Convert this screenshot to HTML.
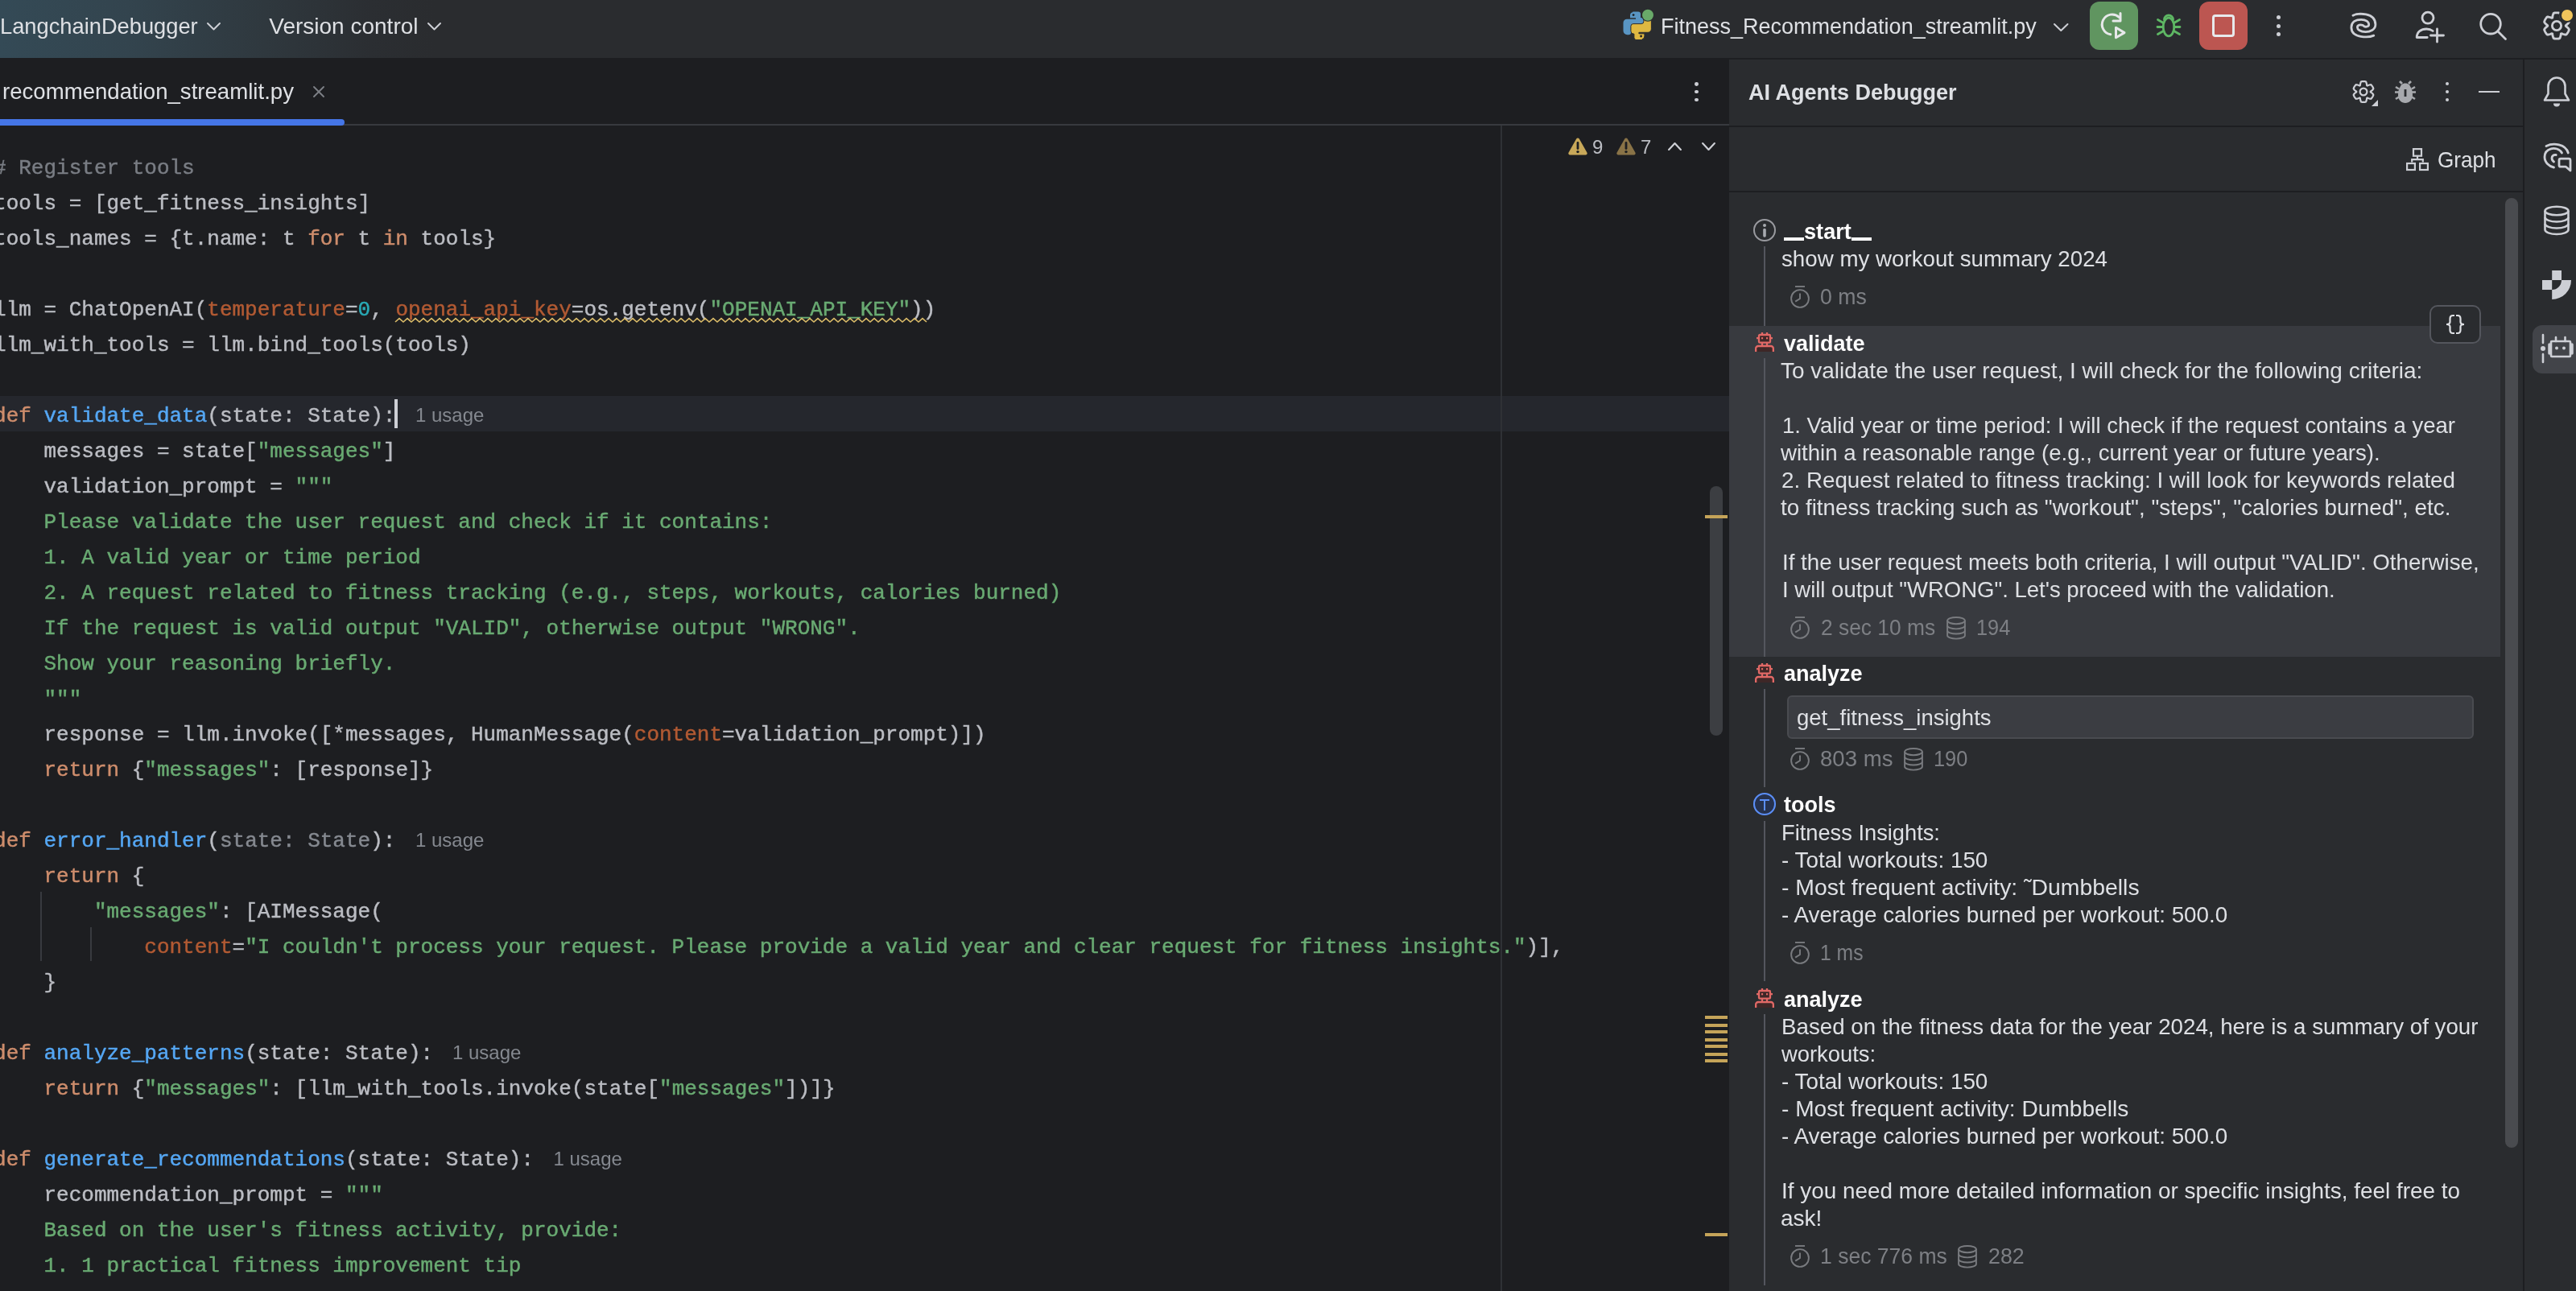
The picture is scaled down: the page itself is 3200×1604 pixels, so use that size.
<!DOCTYPE html><html><head><meta charset="utf-8"><style>
*{box-sizing:border-box;margin:0;padding:0}
html,body{width:3200px;height:1604px;overflow:hidden;background:#1e1f22}
body{position:relative;font-family:"Liberation Sans",sans-serif;color:#dfe1e5;-webkit-font-smoothing:antialiased}
#root{position:absolute;left:0;top:0;width:3200px;height:1604px;will-change:transform;opacity:0.999}
.a{position:absolute}
svg{position:absolute;overflow:visible}
#title{left:0;top:0;width:3200px;height:72px;background:#2b2d30}
#grad{left:0;top:0;width:620px;height:72px;background:linear-gradient(90deg,#354b57 0px,#34454f 160px,#30393f 330px,#2c2f33 460px,#2b2d30 540px)}
.tt{position:absolute;font-size:28px;color:#dfe1e5;white-space:pre;line-height:34px}
#editor{left:0;top:72px;width:2148px;height:1532px;background:#1e1f22;overflow:hidden}
#code{position:absolute;left:-7.94px;top:115px;-webkit-text-stroke-width:0.45px;font-family:"Liberation Mono",monospace;font-size:26px;line-height:44px;color:#bcbec4;white-space:pre}
.ln{height:44px}
.k{color:#cf8e6d}.f{color:#56a8f5}.s{color:#6aab73}.n{color:#2aacb8}.c{color:#7a7e85}.p{color:#b35b34}.u{color:#868a91}
.pw{color:#b35b34}.sw{color:#6aab73}
.hint{position:absolute;font-size:24px;color:#868a91;white-space:pre;line-height:34px}
#panel{left:2148px;top:74px;width:986px;height:1530px;background:#2b2d30}
#strip{left:3136px;top:74px;width:64px;height:1530px;background:#2b2d30}
.pt{position:absolute;font-size:28px;color:#dfe1e5;white-space:pre;line-height:34px}
.pb{position:absolute;font-size:27px;font-weight:bold;color:#ffffff;white-space:pre;line-height:34px}
.meta{position:absolute;font-size:28px;color:#7e8085;white-space:pre;line-height:34px}
</style></head><body><div id="root"><div id="title" class="a"></div><div id="grad" class="a"></div>
<div class="tt" style="left:0.0px;top:15.9px;transform:scaleX(0.9742);transform-origin:0 0;">LangchainDebugger</div>
<svg style="left:257px;top:28px" width="17" height="9.5" viewBox="0 0 17 9.5"><path d="M1.0 1.0L8.5 8.5L16.0 1.0" fill="none" stroke="#ced0d6" stroke-width="2.0" stroke-linecap="round" stroke-linejoin="round"/></svg>
<div class="tt" style="left:334.3px;top:15.9px;transform:scaleX(1.0000);transform-origin:0 0;">Version control</div>
<svg style="left:531px;top:28px" width="17" height="9.5" viewBox="0 0 17 9.5"><path d="M1.0 1.0L8.5 8.5L16.0 1.0" fill="none" stroke="#ced0d6" stroke-width="2.0" stroke-linecap="round" stroke-linejoin="round"/></svg>
<svg style="left:2016px;top:14px" width="36" height="36" viewBox="0 0 36 36">
<path fill="#5a96c4" d="M12.5 0.5h6.5a3 3 0 0 1 3 3v4.5h0.5a3.5 3.5 0 0 1 3.5 3.5v6a3 3 0 0 1-3 3h-10a3 3 0 0 0-3 3v2.8a3 3 0 0 1-3 3h-1.5a5 5 0 0 1-5-5v-10a4.5 4.5 0 0 1 4.5-4.5h11v-1.5h-7v-3a4 4 0 0 1 3-4z"/>
<path fill="#e0b942" stroke="#2b2d30" stroke-width="1" d="M23.4 35.6h-6.5a3 3 0 0 1-3-3v-4.5h-0.5a3.5 3.5 0 0 1-3.5-3.5v-6a3 3 0 0 1 3-3h10a3 3 0 0 0 3-3v-2.8a3 3 0 0 1 3-3h1.5a5 5 0 0 1 5 5v10a4.5 4.5 0 0 1-4.5 4.5h-11v1.5h7v3a4 4 0 0 1-3 4z"/>
<circle cx="13.1" cy="4.6" r="1.4" fill="#1e1f22"/><circle cx="22.6" cy="31" r="1.4" fill="#1e1f22"/>
<circle cx="31" cy="4.8" r="8" fill="#2b2d30"/><circle cx="31" cy="4.8" r="7" fill="#6aab6a"/></svg>
<div class="tt" style="left:2063px;top:16.2px;font-size:27px;">Fitness_Recommendation_streamlit.py</div>
<svg style="left:2551px;top:29px" width="18.5" height="10" viewBox="0 0 18.5 10"><path d="M1.0 1.0L9.25 9.0L17.5 1.0" fill="none" stroke="#ced0d6" stroke-width="2.0" stroke-linecap="round" stroke-linejoin="round"/></svg>
<div class="a" style="left:2596px;top:2px;width:60px;height:60px;border-radius:12px;background:#619661"></div>
<svg style="left:2596px;top:2px" width="60" height="60" viewBox="0 0 60 60" fill="none" stroke="#e8e9eb" stroke-width="3" stroke-linecap="round" stroke-linejoin="round">
<path d="M36.5 19.5A12.5 12.5 0 1 0 25.8 40.8"/><path d="M38 14.5v9.5h-9"/><path d="M32.5 32.3v12.5l10.5-6.2z"/></svg>
<svg style="left:2678px;top:16px" width="32" height="32" viewBox="0 0 32 32" fill="none" stroke="#5fb865" stroke-width="2.8" stroke-linecap="round">
<ellipse cx="16" cy="17.5" rx="6.8" ry="11.3"/><path d="M10.5 8.5a5.5 5.5 0 0 1 11 0"/><path d="M2 17.5h7M23 17.5h7M2.5 8.5l7 4M29.5 8.5l-7 4M2.5 26.5l7-4M29.5 26.5l-7-4"/></svg>
<div class="a" style="left:2732px;top:2px;width:60px;height:60px;border-radius:12px;background:#bd5752"></div>
<div class="a" style="left:2748px;top:18px;width:28px;height:28px;border:3px solid #e8eaed;border-radius:4px"></div>
<div class="a" style="left:2827.5px;top:18.7px;width:5px;height:5px;border-radius:50%;background:#ced0d6"></div>
<div class="a" style="left:2827.5px;top:29.6px;width:5px;height:5px;border-radius:50%;background:#ced0d6"></div>
<div class="a" style="left:2827.5px;top:40.4px;width:5px;height:5px;border-radius:50%;background:#ced0d6"></div>
<svg style="left:2912px;top:10px" width="48" height="44" viewBox="0 0 48 44" fill="none" stroke="#ced0d6" stroke-width="2.8" stroke-linecap="round">
<path d="M10.9 9.2C17 6 38.9 5 38.9 20.5C38.9 27 32 29.7 26.6 29.7C20 29.7 16.4 26.5 16.4 23.9C16.4 21 20 20 23.5 21.5"/>
<path d="M36.8 34.1C31 36.7 8.9 38 8.9 23.9C8.9 17 15 14.3 21.1 14.3C27 14.3 30.7 17 30.7 20.5C30.7 23 27 24 24.5 22.5"/></svg>
<svg style="left:3000px;top:13px" width="38" height="40" viewBox="0 0 38 40" fill="none" stroke="#ced0d6" stroke-width="2.8" stroke-linecap="round">
<circle cx="16" cy="9.2" r="7"/><path d="M2.2 33.5c0-7 5.5-10.5 12-10.5c4 0 6 1 8 2.5M2.2 33.5h13"/><path d="M27.5 23v16M19.5 31h16"/></svg>
<svg style="left:3078px;top:14px" width="38" height="38" viewBox="0 0 38 38" fill="none" stroke="#ced0d6" stroke-width="2.8" stroke-linecap="round">
<circle cx="16" cy="15.7" r="12.3"/><path d="M25 25l9.5 9.5"/></svg>
<svg style="left:3155px;top:11px" width="42" height="42" viewBox="-21 -21 42 42" fill="none" stroke="#ced0d6" stroke-width="2.8">
<path d="M0.0 -16.2L0.6 -16.2L1.1 -16.2L1.7 -16.1L2.3 -16.0L2.8 -16.0L3.4 -15.8L3.9 -15.5L4.2 -14.7L4.5 -13.9L4.8 -13.1L5.0 -12.3L5.1 -11.5L5.2 -10.7L5.3 -9.9L5.6 -9.7L6.0 -9.6L6.7 -9.9L7.4 -10.2L8.2 -10.5L9.0 -10.7L9.8 -10.8L10.6 -11.0L11.5 -11.1L12.0 -10.8L12.4 -10.4L12.8 -10.0L13.1 -9.5L13.4 -9.1L13.7 -8.6L14.0 -8.1L14.3 -7.6L14.6 -7.1L14.8 -6.6L15.0 -6.1L15.2 -5.5L15.4 -5.0L15.3 -4.4L14.8 -3.7L14.3 -3.0L13.7 -2.4L13.1 -1.8L12.5 -1.3L11.9 -0.8L11.3 -0.4L11.2 -0.0L11.3 0.4L11.9 0.8L12.5 1.3L13.1 1.8L13.7 2.4L14.3 3.0L14.8 3.7L15.3 4.4L15.4 5.0L15.2 5.5L15.0 6.1L14.8 6.6L14.6 7.1L14.3 7.6L14.0 8.1L13.7 8.6L13.4 9.1L13.1 9.5L12.8 10.0L12.4 10.4L12.0 10.8L11.5 11.1L10.6 11.0L9.8 10.8L9.0 10.7L8.2 10.5L7.4 10.2L6.7 9.9L6.0 9.6L5.6 9.7L5.3 9.9L5.2 10.7L5.1 11.5L5.0 12.3L4.8 13.1L4.5 13.9L4.2 14.7L3.9 15.5L3.4 15.8L2.8 16.0L2.3 16.0L1.7 16.1L1.1 16.2L0.6 16.2L0.0 16.2L-0.6 16.2L-1.1 16.2L-1.7 16.1L-2.3 16.0L-2.8 16.0L-3.4 15.8L-3.9 15.5L-4.2 14.7L-4.5 13.9L-4.8 13.1L-5.0 12.3L-5.1 11.5L-5.2 10.7L-5.3 9.9L-5.6 9.7L-6.0 9.6L-6.7 9.9L-7.4 10.2L-8.2 10.5L-9.0 10.7L-9.8 10.8L-10.6 11.0L-11.5 11.1L-12.0 10.8L-12.4 10.4L-12.8 10.0L-13.1 9.5L-13.4 9.1L-13.7 8.6L-14.0 8.1L-14.3 7.6L-14.6 7.1L-14.8 6.6L-15.0 6.1L-15.2 5.5L-15.4 5.0L-15.3 4.4L-14.8 3.7L-14.3 3.0L-13.7 2.4L-13.1 1.8L-12.5 1.3L-11.9 0.8L-11.3 0.4L-11.2 0.0L-11.3 -0.4L-11.9 -0.8L-12.5 -1.3L-13.1 -1.8L-13.7 -2.4L-14.3 -3.0L-14.8 -3.7L-15.3 -4.4L-15.4 -5.0L-15.2 -5.5L-15.0 -6.1L-14.8 -6.6L-14.6 -7.1L-14.3 -7.6L-14.0 -8.1L-13.7 -8.6L-13.4 -9.1L-13.1 -9.5L-12.8 -10.0L-12.4 -10.4L-12.0 -10.8L-11.5 -11.1L-10.6 -11.0L-9.8 -10.8L-9.0 -10.7L-8.2 -10.5L-7.4 -10.2L-6.7 -9.9L-6.0 -9.6L-5.6 -9.7L-5.3 -9.9L-5.2 -10.7L-5.1 -11.5L-5.0 -12.3L-4.8 -13.1L-4.5 -13.9L-4.2 -14.7L-3.9 -15.5L-3.4 -15.8L-2.8 -16.0L-2.3 -16.0L-1.7 -16.1L-1.1 -16.2L-0.6 -16.2Z"/><circle cx="0" cy="0" r="5.6"/></svg>
<div class="a" style="left:3179px;top:8px;width:19.5px;height:19.5px;border-radius:50%;background:#2b2d30"></div>
<div class="a" style="left:3181.8px;top:11.6px;width:14px;height:14px;border-radius:50%;background:#f2c55c"></div>
<div id="editor" class="a">
<div class="a" style="left:0;top:82px;width:2148px;height:2px;background:#393b40"></div>
<div class="a" style="left:0;top:76px;width:428px;height:8px;background:#4677e8;border-radius:0 4px 4px 0"></div>
<div class="a" style="left:0;top:420px;width:2148px;height:44px;background:#26282e"></div>
<div class="a" style="left:1864px;top:84px;width:2px;height:1460px;background:#303236"></div>
<div id="code"><div class="ln"><span class="c"># Register tools</span></div><div class="ln">tools = [get_fitness_insights]</div><div class="ln">tools_names = {t.name: t <span class="k">for</span> t <span class="k">in</span> tools}</div><div class="ln"></div><div class="ln">llm = ChatOpenAI(<span class="p">temperature</span>=<span class="n">0</span>, <span class="pw">openai_api_key</span><span class="w">=os.getenv(</span><span class="sw">"OPENAI_API_KEY"</span>))</div><div class="ln">llm_with_tools = llm.bind_tools(tools)</div><div class="ln"></div><div class="ln"><span class="k">def</span> <span class="f">validate_data</span>(state: State):</div><div class="ln">    messages = state[<span class="s">"messages"</span>]</div><div class="ln">    validation_prompt = <span class="s">"""</span></div><div class="ln"><span class="s">    Please validate the user request and check if it contains:</span></div><div class="ln"><span class="s">    1. A valid year or time period</span></div><div class="ln"><span class="s">    2. A request related to fitness tracking (e.g., steps, workouts, calories burned)</span></div><div class="ln"><span class="s">    If the request is valid output "VALID", otherwise output "WRONG".</span></div><div class="ln"><span class="s">    Show your reasoning briefly.</span></div><div class="ln"><span class="s">    """</span></div><div class="ln">    response = llm.invoke([*messages, HumanMessage(<span class="p">content</span>=validation_prompt)])</div><div class="ln">    <span class="k">return</span> {<span class="s">"messages"</span>: [response]}</div><div class="ln"></div><div class="ln"><span class="k">def</span> <span class="f">error_handler</span>(<span class="u">state: State</span>):</div><div class="ln">    <span class="k">return</span> {</div><div class="ln">        <span class="s">"messages"</span>: [AIMessage(</div><div class="ln">            <span class="p">content</span>=<span class="s">"I couldn't process your request. Please provide a valid year and clear request for fitness insights."</span>)],</div><div class="ln">    }</div><div class="ln"></div><div class="ln"><span class="k">def</span> <span class="f">analyze_patterns</span>(state: State):</div><div class="ln">    <span class="k">return</span> {<span class="s">"messages"</span>: [llm_with_tools.invoke(state[<span class="s">"messages"</span>])]}</div><div class="ln"></div><div class="ln"><span class="k">def</span> <span class="f">generate_recommendations</span>(state: State):</div><div class="ln">    recommendation_prompt = <span class="s">"""</span></div><div class="ln"><span class="s">    Based on the user's fitness activity, provide:</span></div><div class="ln"><span class="s">    1. 1 practical fitness improvement tip</span></div><div class="ln"><span class="s">    2. 1 motivational quote</span></div></div>
</div>
<div class="tt" style="left:3px;top:96.9px;font-size:27.6px;">recommendation_streamlit.py</div>
<svg style="left:389px;top:107px" width="14" height="14" viewBox="0 0 14 14" stroke="#7e8187" stroke-width="1.9" stroke-linecap="round"><path d="M1 1l12 12M13 1L1 13"/></svg>
<div class="a" style="left:2105.2px;top:101.89999999999999px;width:4.8px;height:4.8px;border-radius:50%;background:#ced0d6"></div>
<div class="a" style="left:2105.2px;top:111.6px;width:4.8px;height:4.8px;border-radius:50%;background:#ced0d6"></div>
<div class="a" style="left:2105.2px;top:121.6px;width:4.8px;height:4.8px;border-radius:50%;background:#ced0d6"></div>
<svg style="left:1948px;top:170.5px" width="24" height="22" viewBox="0 0 24 22"><path d="M10.2 1.6a2.1 2.1 0 0 1 3.6 0l9.6 16.8a2.1 2.1 0 0 1-1.8 3.2H2.4a2.1 2.1 0 0 1-1.8-3.2z" fill="#c9a95a"/><path d="M12 6.5v7" stroke="#1e1f22" stroke-width="2.8" stroke-linecap="round"/><circle cx="12" cy="17.6" r="1.7" fill="#1e1f22"/></svg>
<div class="pt" style="left:1978px;top:165.7px;font-size:24px;color:#bcbec4">9</div>
<svg style="left:2008px;top:170.5px" width="24" height="22" viewBox="0 0 24 22"><path d="M10.2 1.6a2.1 2.1 0 0 1 3.6 0l9.6 16.8a2.1 2.1 0 0 1-1.8 3.2H2.4a2.1 2.1 0 0 1-1.8-3.2z" fill="#8a7448"/><path d="M12 6.5v7" stroke="#1e1f22" stroke-width="2.8" stroke-linecap="round"/><circle cx="12" cy="17.6" r="1.7" fill="#1e1f22"/></svg>
<div class="pt" style="left:2038px;top:165.7px;font-size:24px;color:#bcbec4">7</div>
<svg style="left:2071.5px;top:177px" width="17" height="10" viewBox="0 0 17 10"><path d="M1.1 8.9L8.5 1.1L15.9 8.9" fill="none" stroke="#ced0d6" stroke-width="2.2" stroke-linecap="round" stroke-linejoin="round"/></svg>
<svg style="left:2113.5px;top:177px" width="17" height="10" viewBox="0 0 17 10"><path d="M1.1 1.1L8.5 8.9L15.9 1.1" fill="none" stroke="#ced0d6" stroke-width="2.2" stroke-linecap="round" stroke-linejoin="round"/></svg>
<div class="a" style="left:2124px;top:604px;width:16px;height:310px;border-radius:8px;background:#3d3f43"></div>
<div class="a" style="left:2118px;top:640px;width:28px;height:4px;background:#c6a55a"></div>
<div class="a" style="left:2118px;top:1262px;width:28px;height:4px;background:#c6a55a"></div>
<div class="a" style="left:2118px;top:1272px;width:28px;height:4px;background:#c6a55a"></div>
<div class="a" style="left:2118px;top:1280px;width:28px;height:4px;background:#c6a55a"></div>
<div class="a" style="left:2118px;top:1290px;width:28px;height:4px;background:#c6a55a"></div>
<div class="a" style="left:2118px;top:1298px;width:28px;height:4px;background:#c6a55a"></div>
<div class="a" style="left:2118px;top:1308px;width:28px;height:4px;background:#c6a55a"></div>
<div class="a" style="left:2118px;top:1316px;width:28px;height:4px;background:#c6a55a"></div>
<div class="a" style="left:2118px;top:1532px;width:28px;height:4px;background:#c6a55a"></div>
<div class="a" style="left:490px;top:496px;width:4px;height:36px;background:#ced0d6"></div>
<div class="hint" style="left:516px;top:498.7px;">1 usage</div>
<div class="hint" style="left:516px;top:1026.7px;">1 usage</div>
<div class="hint" style="left:562px;top:1290.7px;">1 usage</div>
<div class="hint" style="left:687.5px;top:1422.7px;">1 usage</div>
<svg style="left:491px;top:395px" width="660" height="6" viewBox="0 0 660 6"><path d="M0 5l5 -4.4l5 4.4l5 -4.4l5 4.4l5 -4.4l5 4.4l5 -4.4l5 4.4l5 -4.4l5 4.4l5 -4.4l5 4.4l5 -4.4l5 4.4l5 -4.4l5 4.4l5 -4.4l5 4.4l5 -4.4l5 4.4l5 -4.4l5 4.4l5 -4.4l5 4.4l5 -4.4l5 4.4l5 -4.4l5 4.4l5 -4.4l5 4.4l5 -4.4l5 4.4l5 -4.4l5 4.4l5 -4.4l5 4.4l5 -4.4l5 4.4l5 -4.4l5 4.4l5 -4.4l5 4.4l5 -4.4l5 4.4l5 -4.4l5 4.4l5 -4.4l5 4.4l5 -4.4l5 4.4l5 -4.4l5 4.4l5 -4.4l5 4.4l5 -4.4l5 4.4l5 -4.4l5 4.4l5 -4.4l5 4.4l5 -4.4l5 4.4l5 -4.4l5 4.4l5 -4.4l5 4.4l5 -4.4l5 4.4l5 -4.4l5 4.4l5 -4.4l5 4.4l5 -4.4l5 4.4l5 -4.4l5 4.4l5 -4.4l5 4.4l5 -4.4l5 4.4l5 -4.4l5 4.4l5 -4.4l5 4.4l5 -4.4l5 4.4l5 -4.4l5 4.4l5 -4.4l5 4.4l5 -4.4l5 4.4l5 -4.4l5 4.4l5 -4.4l5 4.4l5 -4.4l5 4.4l5 -4.4l5 4.4l5 -4.4l5 4.4l5 -4.4l5 4.4l5 -4.4l5 4.4l5 -4.4l5 4.4l5 -4.4l5 4.4l5 -4.4l5 4.4l5 -4.4l5 4.4l5 -4.4l5 4.4l5 -4.4l5 4.4l5 -4.4l5 4.4l5 -4.4l5 4.4l5 -4.4l5 4.4l5 -4.4l5 4.4l5 -4.4l5 4.4l5 -4.4l5 4.4l5 -4.4l5 4.4" fill="none" stroke="#dcbd6a" stroke-width="1.6" stroke-linejoin="miter"/></svg>
<div class="a" style="left:50px;top:1108px;width:2px;height:86px;background:#393b40"></div>
<div class="a" style="left:112px;top:1152px;width:2px;height:42px;background:#393b40"></div>
<div id="panel" class="a"></div>
<div id="strip" class="a"></div>
<div class="a" style="left:2148px;top:156px;width:986px;height:2px;background:#1e1f22"></div>
<div class="a" style="left:2148px;top:237px;width:986px;height:2px;background:#1e1f22"></div>
<div class="pb" style="left:2172px;top:97.6px;color:#dfe1e5">AI Agents Debugger</div>
<svg style="left:2916px;top:94px" width="40" height="40" viewBox="-20 -20 40 40" fill="none" stroke="#ced0d6" stroke-width="2.2">
<path d="M0.0 -12.9L0.5 -12.9L0.9 -12.9L1.3 -12.8L1.8 -12.8L2.2 -12.7L2.7 -12.6L3.1 -12.3L3.3 -11.7L3.6 -11.0L3.8 -10.4L3.9 -9.7L4.0 -9.1L4.1 -8.4L4.2 -7.8L4.4 -7.6L4.7 -7.5L5.3 -7.8L5.8 -8.0L6.5 -8.3L7.1 -8.5L7.8 -8.6L8.4 -8.7L9.1 -8.8L9.6 -8.6L9.9 -8.3L10.2 -7.9L10.4 -7.6L10.7 -7.2L10.9 -6.8L11.2 -6.5L11.4 -6.1L11.6 -5.7L11.8 -5.2L12.0 -4.8L12.1 -4.4L12.3 -4.0L12.2 -3.5L11.8 -2.9L11.3 -2.4L10.9 -1.9L10.4 -1.5L9.9 -1.0L9.4 -0.7L8.8 -0.3L8.8 -0.0L8.8 0.3L9.4 0.7L9.9 1.0L10.4 1.5L10.9 1.9L11.3 2.4L11.8 2.9L12.2 3.5L12.3 4.0L12.1 4.4L12.0 4.8L11.8 5.2L11.6 5.7L11.4 6.1L11.2 6.4L10.9 6.8L10.7 7.2L10.4 7.6L10.2 7.9L9.9 8.3L9.6 8.6L9.1 8.8L8.4 8.7L7.8 8.6L7.1 8.5L6.5 8.3L5.8 8.0L5.3 7.8L4.7 7.5L4.4 7.6L4.2 7.8L4.1 8.4L4.0 9.1L3.9 9.7L3.8 10.4L3.6 11.0L3.3 11.7L3.1 12.3L2.7 12.6L2.2 12.7L1.8 12.8L1.3 12.8L0.9 12.9L0.5 12.9L0.0 12.9L-0.5 12.9L-0.9 12.9L-1.3 12.8L-1.8 12.8L-2.2 12.7L-2.7 12.6L-3.1 12.3L-3.3 11.7L-3.6 11.0L-3.8 10.4L-3.9 9.7L-4.0 9.1L-4.1 8.4L-4.2 7.8L-4.4 7.6L-4.7 7.5L-5.3 7.8L-5.8 8.0L-6.5 8.3L-7.1 8.5L-7.8 8.6L-8.4 8.7L-9.1 8.8L-9.6 8.6L-9.9 8.3L-10.2 7.9L-10.4 7.6L-10.7 7.2L-10.9 6.8L-11.2 6.5L-11.4 6.1L-11.6 5.7L-11.8 5.2L-12.0 4.8L-12.1 4.4L-12.3 4.0L-12.2 3.5L-11.8 2.9L-11.3 2.4L-10.9 1.9L-10.4 1.5L-9.9 1.0L-9.4 0.7L-8.8 0.3L-8.8 0.0L-8.8 -0.3L-9.4 -0.7L-9.9 -1.0L-10.4 -1.5L-10.9 -1.9L-11.3 -2.4L-11.8 -2.9L-12.2 -3.5L-12.3 -4.0L-12.1 -4.4L-12.0 -4.8L-11.8 -5.2L-11.6 -5.7L-11.4 -6.1L-11.2 -6.5L-10.9 -6.8L-10.7 -7.2L-10.4 -7.6L-10.2 -7.9L-9.9 -8.3L-9.6 -8.6L-9.1 -8.8L-8.4 -8.7L-7.8 -8.6L-7.1 -8.5L-6.5 -8.3L-5.8 -8.0L-5.3 -7.8L-4.7 -7.5L-4.4 -7.6L-4.2 -7.8L-4.1 -8.4L-4.0 -9.1L-3.9 -9.7L-3.8 -10.4L-3.6 -11.0L-3.3 -11.7L-3.1 -12.3L-2.7 -12.6L-2.2 -12.7L-1.8 -12.8L-1.3 -12.8L-0.9 -12.9L-0.5 -12.9Z"/><circle cx="0" cy="0" r="4.4"/></svg>
<svg style="left:2946px;top:124px" width="8" height="8" viewBox="0 0 8 8"><path d="M8 0V8H0z" fill="#ced0d6"/></svg>
<svg style="left:2974px;top:99px" width="28" height="30" viewBox="0 0 28 30" fill="#a8aaae" stroke="#a8aaae">
<path d="M7 2l3 3M21 2l-3 3" stroke-width="2.8" stroke-linecap="butt"/><path d="M14 4.5c4 0 6 2.5 6.5 5h0.5c1.5 3 2 6 2 10c0 5.5-4 9.5-9 9.5s-9-4-9-9.5c0-4 0.5-7 2-10h0.5c0.5-2.5 2.5-5 6.5-5z" stroke="none"/>
<path d="M1 15.5h5M22 15.5h5M2 9l4 2.5M26 9l-4 2.5M2 24l4-2.5M26 24l-4-2.5" stroke-width="2.6"/><rect x="12.6" y="12" width="2.8" height="9" fill="#2b2d30" stroke="none"/></svg>
<div class="a" style="left:3037.7px;top:101.7px;width:4.6px;height:4.6px;border-radius:50%;background:#ced0d6"></div>
<div class="a" style="left:3037.7px;top:111.7px;width:4.6px;height:4.6px;border-radius:50%;background:#ced0d6"></div>
<div class="a" style="left:3037.7px;top:121.7px;width:4.6px;height:4.6px;border-radius:50%;background:#ced0d6"></div>
<div class="a" style="left:3079px;top:113px;width:26px;height:2.4px;background:#ced0d6"></div>
<svg style="left:2988px;top:183px" width="30" height="30" viewBox="0 0 30 30" fill="none" stroke="#ced0d6" stroke-width="2.2">
<rect x="10" y="2.1" width="10" height="8.6"/><path d="M15 10.7v4.4M8.2 18.6v-3.5h13.6v3.5"/><rect x="2.1" y="20" width="9.8" height="8"/><rect x="18.1" y="20" width="9.8" height="8"/></svg>
<div class="pt" style="left:3028.0px;top:182.3px;transform:scaleX(0.9319);transform-origin:0 0;">Graph</div>
<div class="a" style="left:2148px;top:405px;width:958px;height:411px;background:#393b40"></div>
<div class="a" style="left:3112px;top:246px;width:16px;height:1180px;border-radius:8px;background:#4a4c50"></div>
<svg style="left:2178px;top:272px" width="28" height="28" viewBox="0 0 28 28" fill="none">
<circle cx="14" cy="14" r="13" stroke="#9a9ba0" stroke-width="2"/><circle cx="14" cy="8" r="2" fill="#a8aab0"/><path d="M14 13.5v7.5" stroke="#a8aab0" stroke-width="3.6" stroke-linecap="round"/></svg>
<div class="pb" style="left:2241.1px;top:270.6px;transform:scaleX(1.0051);transform-origin:0 0;">start</div>
<div class="a" style="left:2216px;top:295.3px;width:24.8px;height:3.5px;background:#ffffff"></div>
<div class="a" style="left:2300.4px;top:295.3px;width:24.8px;height:3.5px;background:#ffffff"></div>
<div class="a" style="left:2191px;top:306px;width:2px;height:99px;background:#55575f"></div>
<div class="pt" style="left:2213.0px;top:305.3px;transform:scaleX(0.9895);transform-origin:0 0;">show my workout summary 2024</div>
<svg style="left:2224px;top:355px" width="24" height="28" viewBox="0 0 24 28" fill="none" stroke="#7a7c80" stroke-width="1.9">
<circle cx="12" cy="16" r="10.9"/><path d="M6 1h12"/><path d="M12 9.4v6.6l-5.8 3.6"/></svg>
<div class="meta" style="left:2261.0px;top:352.3px;transform:scaleX(0.9522);transform-origin:0 0;">0 ms</div>
<svg style="left:2180px;top:413px" width="24" height="24" viewBox="0 0 24 24" fill="none" stroke="#e26a67" stroke-width="2.3">
<path d="M9 0v3M15 0v3M2 7.2h3M19 7.2h3M9 13v3M15 13v3" />
<rect x="5" y="3" width="14" height="9.7" rx="1.2" fill="#3f2828"/>
<path d="M1.15 24V20a3 3 0 0 1 3-3h15.7a3 3 0 0 1 3 3V24" fill="#3f2828"/>
<rect x="8" y="6.1" width="2.1" height="2.2" fill="#e26a67" stroke="none"/><rect x="14" y="6.1" width="2.1" height="2.2" fill="#e26a67" stroke="none"/>
</svg>
<div class="pb" style="left:2216px;top:409.6px;">validate</div>
<div class="a" style="left:2191px;top:445px;width:2px;height:371px;background:#55575f"></div>
<div class="pt" style="left:2212.0px;top:444.3px;transform:scaleX(0.9987);transform-origin:0 0;">To validate the user request, I will check for the following criteria:</div>
<div class="pt" style="left:2214.0px;top:512.3px;transform:scaleX(0.9826);transform-origin:0 0;">1. Valid year or time period: I will check if the request contains a year</div>
<div class="pt" style="left:2212.1px;top:546.3px;transform:scaleX(0.9865);transform-origin:0 0;">within a reasonable range (e.g., current year or future years).</div>
<div class="pt" style="left:2213.0px;top:580.3px;transform:scaleX(0.9923);transform-origin:0 0;">2. Request related to fitness tracking: I will look for keywords related</div>
<div class="pt" style="left:2212.0px;top:614.3px;transform:scaleX(0.9936);transform-origin:0 0;">to fitness tracking such as &quot;workout&quot;, &quot;steps&quot;, &quot;calories burned&quot;, etc.</div>
<div class="pt" style="left:2214.0px;top:682.3px;transform:scaleX(0.9890);transform-origin:0 0;">If the user request meets both criteria, I will output &quot;VALID&quot;. Otherwise,</div>
<div class="pt" style="left:2214.0px;top:716.3px;transform:scaleX(0.9821);transform-origin:0 0;">I will output &quot;WRONG&quot;. Let&#x27;s proceed with the validation.</div>
<svg style="left:2224px;top:766px" width="24" height="28" viewBox="0 0 24 28" fill="none" stroke="#7a7c80" stroke-width="1.9">
<circle cx="12" cy="16" r="10.9"/><path d="M6 1h12"/><path d="M12 9.4v6.6l-5.8 3.6"/></svg>
<div class="meta" style="left:2261.9px;top:763.3px;transform:scaleX(0.9411);transform-origin:0 0;">2 sec 10 ms</div>
<svg style="left:2418px;top:766px" width="24" height="28" viewBox="0 0 24 28" fill="none" stroke="#7a7c80" stroke-width="1.9">
<ellipse cx="12" cy="5.1" rx="10.9" ry="4.1"/><path d="M1.1 5.1v18.4c0 2.3 4.9 4.1 10.9 4.1s10.9-1.8 10.9-4.1V5.1"/>
<path d="M1.1 11.3c0 2.3 4.9 4.1 10.9 4.1s10.9-1.8 10.9-4.1M1.1 17.4c0 2.3 4.9 4.1 10.9 4.1s10.9-1.8 10.9-4.1"/></svg>
<div class="meta" style="left:2455.3px;top:763.3px;transform:scaleX(0.9036);transform-origin:0 0;">194</div>
<div class="a" style="left:3018px;top:379px;width:64px;height:48px;border:2px solid #55575e;border-radius:10px;background:#2b2d30"></div>
<svg style="left:3036px;top:389px" width="28" height="28" viewBox="0 0 28 28" fill="none" stroke="#dfe1e5" stroke-width="2.2">
<path d="M13 3H11C8.5 3 7.5 4.5 7.5 7V11C7.5 13 6.5 14 3 14C6.5 14 7.5 15 7.5 17V21C7.5 23.5 8.5 25 11 25H13"/><path d="M15 3H17C19.5 3 20.5 4.5 20.5 7V11C20.5 13 21.5 14 25 14C21.5 14 20.5 15 20.5 17V21C20.5 23.5 19.5 25 17 25H15"/></svg>
<svg style="left:2180px;top:824px" width="24" height="24" viewBox="0 0 24 24" fill="none" stroke="#e26a67" stroke-width="2.3">
<path d="M9 0v3M15 0v3M2 7.2h3M19 7.2h3M9 13v3M15 13v3" />
<rect x="5" y="3" width="14" height="9.7" rx="1.2" fill="#3f2828"/>
<path d="M1.15 24V20a3 3 0 0 1 3-3h15.7a3 3 0 0 1 3 3V24" fill="#3f2828"/>
<rect x="8" y="6.1" width="2.1" height="2.2" fill="#e26a67" stroke="none"/><rect x="14" y="6.1" width="2.1" height="2.2" fill="#e26a67" stroke="none"/>
</svg>
<div class="pb" style="left:2216px;top:819.6px;">analyze</div>
<div class="a" style="left:2191px;top:856px;width:2px;height:122px;background:#55575f"></div>
<div class="a" style="left:2220px;top:864px;width:853px;height:54px;border:2px solid #4a4c51;border-radius:6px;background:#3c3e43"></div>
<div class="pt" style="left:2232px;top:874.5px;font-size:27.5px;">get_fitness_insights</div>
<svg style="left:2224px;top:929px" width="24" height="28" viewBox="0 0 24 28" fill="none" stroke="#7a7c80" stroke-width="1.9">
<circle cx="12" cy="16" r="10.9"/><path d="M6 1h12"/><path d="M12 9.4v6.6l-5.8 3.6"/></svg>
<div class="meta" style="left:2261.0px;top:926.3px;transform:scaleX(0.9847);transform-origin:0 0;">803 ms</div>
<svg style="left:2365px;top:929px" width="24" height="28" viewBox="0 0 24 28" fill="none" stroke="#7a7c80" stroke-width="1.9">
<ellipse cx="12" cy="5.1" rx="10.9" ry="4.1"/><path d="M1.1 5.1v18.4c0 2.3 4.9 4.1 10.9 4.1s10.9-1.8 10.9-4.1V5.1"/>
<path d="M1.1 11.3c0 2.3 4.9 4.1 10.9 4.1s10.9-1.8 10.9-4.1M1.1 17.4c0 2.3 4.9 4.1 10.9 4.1s10.9-1.8 10.9-4.1"/></svg>
<div class="meta" style="left:2401.7px;top:926.3px;transform:scaleX(0.9058);transform-origin:0 0;">190</div>
<svg style="left:2178px;top:985px" width="28" height="28" viewBox="0 0 28 28" fill="none">
<circle cx="14" cy="14" r="13" stroke="#5c8ff7" stroke-width="2.1" fill="#273350"/><path d="M8 9h12M14 9v13" stroke="#5c8ff7" stroke-width="2"/></svg>
<div class="pb" style="left:2216px;top:982.6px;">tools</div>
<div class="a" style="left:2191px;top:1020px;width:2px;height:199px;background:#55575f"></div>
<div class="pt" style="left:2213.0px;top:1018.3px;transform:scaleX(0.9733);transform-origin:0 0;">Fitness Insights:</div>
<div class="pt" style="left:2213.0px;top:1052.3px;transform:scaleX(0.9942);transform-origin:0 0;">- Total workouts: 150</div>
<div class="pt" style="left:2213.0px;top:1086.3px;transform:scaleX(1.0132);transform-origin:0 0;">- Most frequent activity: ˜Dumbbells</div>
<div class="pt" style="left:2213.0px;top:1120.3px;transform:scaleX(0.9927);transform-origin:0 0;">- Average calories burned per workout: 500.0</div>
<svg style="left:2224px;top:1170px" width="24" height="28" viewBox="0 0 24 28" fill="none" stroke="#7a7c80" stroke-width="1.9">
<circle cx="12" cy="16" r="10.9"/><path d="M6 1h12"/><path d="M12 9.4v6.6l-5.8 3.6"/></svg>
<div class="meta" style="left:2261.0px;top:1167.3px;transform:scaleX(0.8830);transform-origin:0 0;">1 ms</div>
<svg style="left:2180px;top:1228px" width="24" height="24" viewBox="0 0 24 24" fill="none" stroke="#e26a67" stroke-width="2.3">
<path d="M9 0v3M15 0v3M2 7.2h3M19 7.2h3M9 13v3M15 13v3" />
<rect x="5" y="3" width="14" height="9.7" rx="1.2" fill="#3f2828"/>
<path d="M1.15 24V20a3 3 0 0 1 3-3h15.7a3 3 0 0 1 3 3V24" fill="#3f2828"/>
<rect x="8" y="6.1" width="2.1" height="2.2" fill="#e26a67" stroke="none"/><rect x="14" y="6.1" width="2.1" height="2.2" fill="#e26a67" stroke="none"/>
</svg>
<div class="pb" style="left:2216px;top:1224.6px;">analyze</div>
<div class="a" style="left:2191px;top:1260px;width:2px;height:337px;background:#55575f"></div>
<div class="pt" style="left:2213.0px;top:1259.3px;transform:scaleX(0.9894);transform-origin:0 0;">Based on the fitness data for the year 2024, here is a summary of your</div>
<div class="pt" style="left:2213.1px;top:1293.3px;transform:scaleX(0.9775);transform-origin:0 0;">workouts:</div>
<div class="pt" style="left:2213.0px;top:1327.3px;transform:scaleX(0.9942);transform-origin:0 0;">- Total workouts: 150</div>
<div class="pt" style="left:2213.0px;top:1361.3px;transform:scaleX(1.0042);transform-origin:0 0;">- Most frequent activity: Dumbbells</div>
<div class="pt" style="left:2213.0px;top:1395.3px;transform:scaleX(0.9927);transform-origin:0 0;">- Average calories burned per workout: 500.0</div>
<div class="pt" style="left:2213.0px;top:1463.3px;transform:scaleX(0.9956);transform-origin:0 0;">If you need more detailed information or specific insights, feel free to</div>
<div class="pt" style="left:2212px;top:1497.3px;">ask!</div>
<svg style="left:2224px;top:1547px" width="24" height="28" viewBox="0 0 24 28" fill="none" stroke="#7a7c80" stroke-width="1.9">
<circle cx="12" cy="16" r="10.9"/><path d="M6 1h12"/><path d="M12 9.4v6.6l-5.8 3.6"/></svg>
<div class="meta" style="left:2261.0px;top:1544.3px;transform:scaleX(0.9477);transform-origin:0 0;">1 sec 776 ms</div>
<svg style="left:2432px;top:1547px" width="24" height="28" viewBox="0 0 24 28" fill="none" stroke="#7a7c80" stroke-width="1.9">
<ellipse cx="12" cy="5.1" rx="10.9" ry="4.1"/><path d="M1.1 5.1v18.4c0 2.3 4.9 4.1 10.9 4.1s10.9-1.8 10.9-4.1V5.1"/>
<path d="M1.1 11.3c0 2.3 4.9 4.1 10.9 4.1s10.9-1.8 10.9-4.1M1.1 17.4c0 2.3 4.9 4.1 10.9 4.1s10.9-1.8 10.9-4.1"/></svg>
<div class="meta" style="left:2469.7px;top:1544.3px;transform:scaleX(0.9572);transform-origin:0 0;">282</div>
<div class="a" style="left:3134px;top:72px;width:2px;height:1532px;background:#1e1f22"></div>
<svg style="left:3159px;top:95px" width="34" height="38" viewBox="0 0 34 38" fill="none" stroke="#ced0d6" stroke-width="2.6" stroke-linejoin="round">
<path d="M2 29.5h30l-4.5-8V12a10.5 10.5 0 0 0-21 0v9.5z"/><path d="M13 33.5h8a4 4 0 0 1-8 0z" fill="#ced0d6" stroke="none"/></svg>
<svg style="left:3150px;top:170px" width="50" height="50" viewBox="0 0 50 50" fill="none" stroke="#ced0d6" stroke-width="2.8" stroke-linecap="round">
<path d="M13 11.5C22 7 37 9 40.3 20"/><path d="M32.5 20C30 15 23 13.5 19 14.8C13 16.5 11 21 11 25C11 32 17 37 22.5 38"/><path d="M25.2 22.5C22 22 20 24 20 26.5C20 28.5 21 30 22.5 31"/>
<path d="M31 27.1H41A2 2 0 0 1 43 29.1V42L37.5 37.2H31A2 2 0 0 1 29 35.2V29.1A2 2 0 0 1 31 27.1Z" fill="#2b2d30" stroke-linecap="butt" stroke-linejoin="round"/></svg>
<svg style="left:3159px;top:255px" width="34" height="38" viewBox="0 0 34 38" fill="none" stroke="#ced0d6" stroke-width="2.6">
<ellipse cx="17" cy="7" rx="14.5" ry="5.3"/><path d="M2.5 7v23.5c0 3 6.5 5.5 14.5 5.5s14.5-2.5 14.5-5.5V7"/><path d="M2.5 15c0 3 6.5 5.5 14.5 5.5S31.5 18 31.5 15M2.5 23c0 3 6.5 5.5 14.5 5.5S31.5 26 31.5 23"/></svg>
<svg style="left:3158px;top:336px" width="36" height="36" viewBox="0 0 36 36" fill="#ced0d6">
<rect x="12.2" y="0" width="11.8" height="12"/><rect x="0" y="12" width="12.2" height="12"/><path d="M12.2 12H36A24 24 0 0 1 12.2 36V24a12 12 0 0 0 11.8-12z"/></svg>
<div class="a" style="left:3146px;top:404px;width:70px;height:60px;border-radius:12px;background:#43454a"></div>
<svg style="left:3154px;top:414px" width="46" height="40" viewBox="0 0 46 40" fill="none" stroke="#ced0d6" stroke-width="2.6" stroke-linecap="round">
<path d="M5 2v10M5 26v10"/><circle cx="5" cy="19" r="3" fill="#ced0d6" stroke="none"/>
<rect x="15" y="10" width="24" height="19" rx="1"/><path d="M21 5v5M32.5 5v5"/><path d="M13 14v11M41 14v11" stroke-width="3.5"/>
<circle cx="22" cy="18.5" r="2" fill="#ced0d6" stroke="none"/><circle cx="31" cy="18.5" r="2" fill="#ced0d6" stroke="none"/></svg></div></body></html>
